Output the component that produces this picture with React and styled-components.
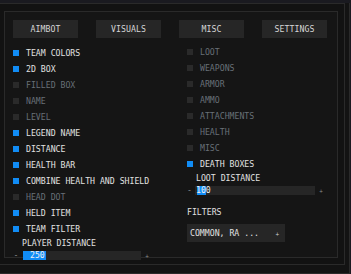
import styled, { createGlobalStyle } from 'styled-components';

const GlobalStyle = createGlobalStyle`
  html, body {
    margin: 0;
    padding: 0;
    background: #1a1a20;
    overflow: hidden;
  }
  * { box-sizing: border-box; }
`;

const left = [
  ['TEAM COLORS', true],
  ['2D BOX', true],
  ['FILLED BOX', false],
  ['NAME', false],
  ['LEVEL', false],
  ['LEGEND NAME', true],
  ['DISTANCE', true],
  ['HEALTH BAR', true],
  ['COMBINE HEALTH AND SHIELD', true],
  ['HEAD DOT', false],
  ['HELD ITEM', true],
  ['TEAM FILTER', true],
];

const right = [
  ['LOOT', false],
  ['WEAPONS', false],
  ['ARMOR', false],
  ['AMMO', false],
  ['ATTACHMENTS', false],
  ['HEALTH', false],
  ['MISC', false],
  ['DEATH BOXES', true],
];

const App = () => {
  return (
    <Shell>
      <GlobalStyle />
      <Window>
        <Panel>
          <Tabs>
            <Tab>AIMBOT</Tab>
            <Tab>VISUALS</Tab>
            <Tab>MISC</Tab>
            <Tab>SETTINGS</Tab>
          </Tabs>
          <Columns>
            <Column>
              {left.map(([name, on]) => (
                <Row key={name}>
                  <Box $on={on} />
                  <Text $on={on}>{name}</Text>
                </Row>
              ))}
              <Label $indent={9}>PLAYER DISTANCE</Label>
              <Slider>
                <Minus $w={6}>-</Minus>
                <Track $gap={4} $w={118}>
                  <Fill style={{ width: 23 }} />
                  <Value $pad={7}>250</Value>
                </Track>
                <Plus>+</Plus>
              </Slider>
            </Column>
            <Column $shift={-1}>
              {right.map(([name, on]) => (
                <Row key={name}>
                  <Box $on={on} />
                  <Text $on={on}>{name}</Text>
                </Row>
              ))}
              <Label $indent={9}>LOOT DISTANCE</Label>
              <Slider>
                <Minus $w={4}>-</Minus>
                <Track $gap={4} $w={120}>
                  <Select style={{ left: 2, width: 9 }} />
                  <Value $pad={1}>100</Value>
                </Track>
                <Plus>+</Plus>
              </Slider>
              <Label $indent={-1} $top={10}>FILTERS</Label>
              <Dropdown>
                <span>COMMON, RA ...</span>
                <DropPlus>+</DropPlus>
              </Dropdown>
            </Column>
          </Columns>
        </Panel>
      </Window>
    </Shell>
  );
};

export default App;

const Shell = styled.div`
  width: 350px;
  height: 271px;
  background: #131313;
  border-right: 1px solid #2a2a2a;
  border-bottom: 1px solid #2a2a2a;
  padding-bottom: 5px;
  font-family: 'DejaVu Sans Mono', 'Liberation Mono', monospace;
  font-size: 8.2px;
  text-transform: uppercase;
`;

const Window = styled.div`
  margin-top: 3px;
  width: 345px;
  border-top: 1px solid #2a2a2a;
  border-right: 1px solid #2a2a2a;
  border-bottom: 1px solid #2a2a2a;
  padding: 7px 6px 6px 4px;
  background: #121212;
`;

const Panel = styled.div`
  height: 247px;
  border: 1px solid #2a2a2a;
  background: #151515;
  padding: 8px 0 0 8px;
`;

const Tabs = styled.div`
  display: flex;
  gap: 18px;
`;

const Tab = styled.div`
  width: 65px;
  height: 18px;
  background: #262626;
  color: #d6d6d6;
  display: flex;
  align-items: center;
  justify-content: center;
  letter-spacing: 0.1px;
`;

const Columns = styled.div`
  display: grid;
  grid-template-columns: 174px 1fr;
  margin-top: 7px;
`;

const Column = styled.div`
  display: flex;
  flex-direction: column;
  margin-top: ${p => p.$shift || 0}px;
`;

const Row = styled.div`
  height: 16px;
  display: flex;
  align-items: center;
  gap: 7px;
`;

const Box = styled.div`
  width: 6px;
  height: 6px;
  background: ${p => (p.$on ? '#118cf5' : '#2a2a2a')};
`;

const Text = styled.span`
  color: ${p => (p.$on ? '#e2e2e2' : '#687077')};
  line-height: 8px;
`;

const Label = styled.div`
  color: #e2e2e2;
  padding-left: ${p => p.$indent}px;
  margin-top: ${p => p.$top || 0}px;
  height: 12px;
  display: flex;
  align-items: center;
`;

const Slider = styled.div`
  display: flex;
  align-items: center;
  height: 12px;
`;

const Minus = styled.span`
  width: ${p => p.$w}px;
  text-align: center;
  color: #8a8a8a;
`;

const Track = styled.div`
  position: relative;
  margin-left: ${p => p.$gap}px;
  width: ${p => p.$w}px;
  height: 9px;
  background: #262626;
  display: flex;
  align-items: center;
`;

const Fill = styled.div`
  position: absolute;
  left: 0;
  top: 0;
  bottom: 0;
  background: #118cf5;
`;

const Select = styled.div`
  position: absolute;
  top: 0;
  bottom: 0;
  background: #118cf5;
`;

const Value = styled.span`
  position: relative;
  color: #f0f0f0;
  padding-left: ${p => p.$pad}px;
`;

const Plus = styled.span`
  width: 12px;
  text-align: center;
  color: #8a8a8a;
  font-size: 6px;
`;

const Dropdown = styled.div`
  margin-top: 6px;
  width: 98px;
  height: 18px;
  background: #262626;
  color: #e2e2e2;
  display: flex;
  align-items: center;
  justify-content: space-between;
  padding: 0 6px 0 3px;
`;

const DropPlus = styled.span`
  font-size: 6px;
  color: #cfcfcf;
`;
